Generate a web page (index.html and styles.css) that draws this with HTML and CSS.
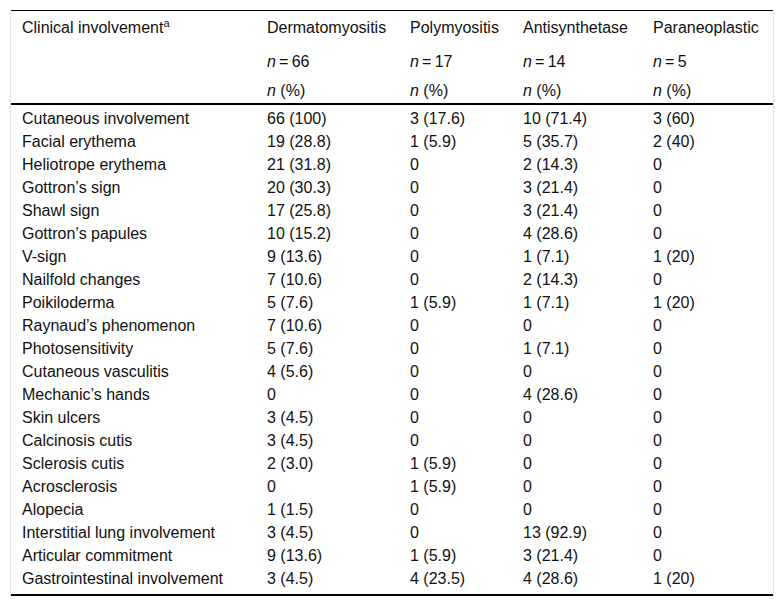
FILE: index.html
```html
<!DOCTYPE html>
<html>
<head>
<meta charset="utf-8">
<link rel="stylesheet" href="styles.css">
</head>
<body>
<div class="frame">
<table class="data">
<colgroup>
<col class="c1"><col class="c2"><col class="c3"><col class="c4"><col class="c5">
</colgroup>
<thead>
<tr class="h1">
<th rowspan="3" class="lead">Clinical involvement<sup>a</sup></th>
<th>Dermatomyositis</th><th>Polymyositis</th><th>Antisynthetase</th><th>Paraneoplastic</th>
</tr>
<tr class="h2">
<th><i>n</i>&#8201;=&#8201;66</th><th><i>n</i>&#8201;=&#8201;17</th><th><i>n</i>&#8201;=&#8201;14</th><th><i>n</i>&#8201;=&#8201;5</th>
</tr>
<tr class="h3">
<th><i>n</i> (%)</th><th><i>n</i> (%)</th><th><i>n</i> (%)</th><th><i>n</i> (%)</th>
</tr>
</thead>
<tbody>
<tr><td>Cutaneous involvement</td><td>66 (100)</td><td>3 (17.6)</td><td>10 (71.4)</td><td>3 (60)</td></tr>
<tr><td>Facial erythema</td><td>19 (28.8)</td><td>1 (5.9)</td><td>5 (35.7)</td><td>2 (40)</td></tr>
<tr><td>Heliotrope erythema</td><td>21 (31.8)</td><td>0</td><td>2 (14.3)</td><td>0</td></tr>
<tr><td>Gottron’s sign</td><td>20 (30.3)</td><td>0</td><td>3 (21.4)</td><td>0</td></tr>
<tr><td>Shawl sign</td><td>17 (25.8)</td><td>0</td><td>3 (21.4)</td><td>0</td></tr>
<tr><td>Gottron’s papules</td><td>10 (15.2)</td><td>0</td><td>4 (28.6)</td><td>0</td></tr>
<tr><td>V-sign</td><td>9 (13.6)</td><td>0</td><td>1 (7.1)</td><td>1 (20)</td></tr>
<tr><td>Nailfold changes</td><td>7 (10.6)</td><td>0</td><td>2 (14.3)</td><td>0</td></tr>
<tr><td>Poikiloderma</td><td>5 (7.6)</td><td>1 (5.9)</td><td>1 (7.1)</td><td>1 (20)</td></tr>
<tr><td>Raynaud’s phenomenon</td><td>7 (10.6)</td><td>0</td><td>0</td><td>0</td></tr>
<tr><td>Photosensitivity</td><td>5 (7.6)</td><td>0</td><td>1 (7.1)</td><td>0</td></tr>
<tr><td>Cutaneous vasculitis</td><td>4 (5.6)</td><td>0</td><td>0</td><td>0</td></tr>
<tr><td>Mechanic’s hands</td><td>0</td><td>0</td><td>4 (28.6)</td><td>0</td></tr>
<tr><td>Skin ulcers</td><td>3 (4.5)</td><td>0</td><td>0</td><td>0</td></tr>
<tr><td>Calcinosis cutis</td><td>3 (4.5)</td><td>0</td><td>0</td><td>0</td></tr>
<tr><td>Sclerosis cutis</td><td>2 (3.0)</td><td>1 (5.9)</td><td>0</td><td>0</td></tr>
<tr><td>Acrosclerosis</td><td>0</td><td>1 (5.9)</td><td>0</td><td>0</td></tr>
<tr><td>Alopecia</td><td>1 (1.5)</td><td>0</td><td>0</td><td>0</td></tr>
<tr><td>Interstitial lung involvement</td><td>3 (4.5)</td><td>0</td><td>13 (92.9)</td><td>0</td></tr>
<tr><td>Articular commitment</td><td>9 (13.6)</td><td>1 (5.9)</td><td>3 (21.4)</td><td>0</td></tr>
<tr class="last"><td>Gastrointestinal involvement</td><td>3 (4.5)</td><td>4 (23.5)</td><td>4 (28.6)</td><td>1 (20)</td></tr>
</tbody>
</table>
</div>
</body>
</html>
```
FILE: styles.css
```css
html, body {
  margin: 0;
  padding: 0;
  background: #ffffff;
}

body {
  font-family: "Liberation Sans", Arial, sans-serif;
  font-size: 16px;
  color: #111111;
}

.frame {
  margin: 10px 10px 0 10px;
  width: 762px;
  border-left: 1px solid #e4e4e4;
  border-right: 1px solid #e4e4e4;
}

.data {
  width: 762px;
  table-layout: fixed;
  border-collapse: collapse;
  border-top: 1px solid #000000;
  border-bottom: 2px solid #000000;
}

.c1 { width: 245px; }
.c2 { width: 143px; }
.c3 { width: 113px; }
.c4 { width: 130px; }
.c5 { width: 131px; }

.data th,
.data td {
  text-align: left;
  vertical-align: top;
  font-weight: normal;
  line-height: 18px;
  padding: 0 4px 0 11px;
  white-space: nowrap;
}

.data thead {
  border-bottom: 2px solid #000000;
}

.h1 th { padding-top: 8px; padding-bottom: 6px; }
.h2 th { padding-top: 10px; padding-bottom: 5px; }
.h3 th { padding-top: 6px; padding-bottom: 3px; }

.data sup {
  font-size: 11px;
  line-height: 0;
  vertical-align: 6px;
}

.data tbody td {
  padding-top: 5px;
  padding-bottom: 0;
}

.data tbody tr.last td {
  padding-bottom: 6px;
}
```
